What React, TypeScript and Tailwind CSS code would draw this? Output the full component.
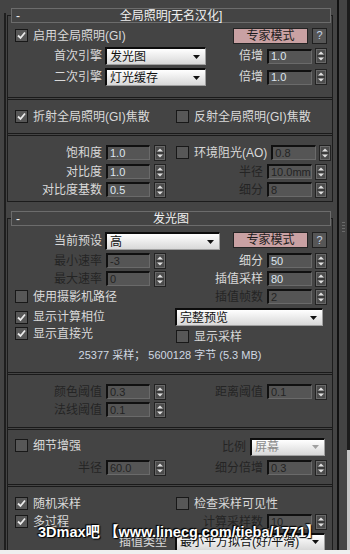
import React from 'react';

// V-Ray 全局照明 / 发光图 rollouts, 3ds Max dark UI
const ui = "font-['Liberation_Sans','Noto_Sans_CJK_SC',sans-serif]";

function Check({ on }: { on?: boolean }) {
  return (
    <div className="w-[13px] h-[13px] shrink-0 border border-[#181818] bg-[#575757] flex items-center justify-center">
      {on && (
        <svg width="9" height="9" viewBox="0 0 9 9">
          <path d="M1 4.5 L3.5 7 L8 1.5" fill="none" stroke="#ececec" strokeWidth="1.8" />
        </svg>
      )}
    </div>
  );
}

function Label({ children, off }: { children: React.ReactNode; off?: boolean }) {
  return (
    <span className={`text-[12px] leading-none whitespace-nowrap ${off ? 'text-[#242424]' : 'text-[#d9d9d9]'}`}>
      {children}
    </span>
  );
}

function CheckLabel({ on, children }: { on?: boolean; children: React.ReactNode }) {
  return (
    <div className="flex items-center">
      <Check on={on} />
      <span className="ml-[5px] text-[12px] leading-none whitespace-nowrap text-[#d9d9d9]">{children}</span>
    </div>
  );
}

function Field({ v, off, w }: { v: string; off?: boolean; w: string }) {
  return (
    <div
      className={`${w} h-[15px] shrink-0 flex items-center pl-[2px] bg-[#555555] border-t-2 border-l-2 border-[#101010] border-r border-b border-r-[#6a6a6a] border-b-[#6a6a6a] text-[11px] leading-none font-['Liberation_Sans',sans-serif] ${off ? 'text-[#242424]' : 'text-[#dde5ef]'}`}
    >
      {v}
    </div>
  );
}

function Spin() {
  return (
    <svg width="12" height="16" viewBox="0 0 12 16" className="block">
      <rect x="0.5" y="0.5" width="11" height="15" fill="#4c4c4c" stroke="#222222" />
      <rect x="1.5" y="1.5" width="9" height="13" fill="none" stroke="#686868" />
      <path d="M3 6.5 L6 3.5 L9 6.5 Z" fill="#e2e2e2" />
      <line x1="2" y1="8" x2="10" y2="8" stroke="#2a2a2a" />
      <path d="M3 9.5 L9 9.5 L6 12.5 Z" fill="#e2e2e2" />
    </svg>
  );
}

function Drop({ v, w, off }: { v: string; w: string; off?: boolean }) {
  return (
    <div
      className={`${w} h-[18px] shrink-0 flex items-center justify-between pl-[3px] pr-[5px] border-t-2 border-l-2 border-[#0c0c0c] border-r border-b border-r-[#a0a0a0] border-b-[#a0a0a0] bg-linear-to-b from-[#ffffff] to-[#d8d8d8] ${off ? 'text-[#8c8c8c]' : 'text-[#111111]'}`}
    >
      <span className="text-[12px] leading-none whitespace-nowrap">{v}</span>
      <svg width="7" height="4" viewBox="0 0 7 4">
        <path d="M0 0 H7 L3.5 4 Z" fill={off ? '#a0a0a0' : '#111111'} />
      </svg>
    </div>
  );
}

function NumL({ label, v, off }: { label: string; v: string; off?: boolean }) {
  return (
    <div className="w-[168px] shrink-0 flex items-center">
      <div className="w-[94px] flex justify-end">
        <Label off={off}>{label}</Label>
      </div>
      <div className="ml-[4px]">
        <Field v={v} off={off} w="w-[44px]" />
      </div>
      <div className="ml-[4px]">
        <Spin />
      </div>
    </div>
  );
}

function NumR({ lead, v, off, left }: { lead: React.ReactNode; v: string; off?: boolean; left?: boolean }) {
  return (
    <div className="flex-1 flex items-center pr-[5px]">
      <div className={`flex-1 flex items-center ${left ? 'justify-start' : 'justify-end'}`}>{lead}</div>
      <div className="ml-[4px]">
        <Field v={v} off={off} w="w-[45px]" />
      </div>
      <div className="ml-[3px]">
        <Spin />
      </div>
    </div>
  );
}

function Buttons() {
  return (
    <div className="ml-auto flex items-center pr-[5px]">
      <div className="w-[75px] h-[16px] bg-[#c9a1a3] border border-[#242424] flex items-center justify-center text-[12px] leading-none text-[#1c1c1c]">
        专家模式
      </div>
      <div className="ml-[4px] w-[15px] h-[16px] bg-[#565656] border border-[#202020] flex items-center justify-center text-[11px] leading-none text-[#c6d4e6]">
        ?
      </div>
    </div>
  );
}

function Head({ title }: { title: string }) {
  return (
    <div className="-mt-[8px] ml-[3px] mr-[1px] h-[15px] border border-[#6c6c6c] bg-[#444444] flex items-center">
      <span className="w-[14px] pl-[4px] text-[12px] leading-none text-[#eeeeee]">-</span>
      <span className="flex-1 text-center text-[12px] leading-none text-[#f0f0f0]">{title}</span>
      <span className="w-[14px]" />
    </div>
  );
}

function Sep({ mt }: { mt: string }) {
  return <div className={`${mt} h-[3px] border-t border-b border-[#1a1a1a]`} />;
}

function GlobalIllum() {
  return (
    <div className="border border-[#1c1c1c] pb-[4px]">
      <Head title="全局照明[无名汉化]" />
      <div className="mt-[4px] h-[17px] flex items-center pl-[7px]">
        <CheckLabel on>启用全局照明(GI)</CheckLabel>
        <Buttons />
      </div>
      <div className="mt-[3px] h-[18px] flex items-center">
        <div className="w-[94px] flex justify-end">
          <Label>首次引擎</Label>
        </div>
        <div className="ml-[3px]">
          <Drop v="发光图" w="w-[101px]" />
        </div>
        <NumR lead={<Label>倍增</Label>} v="1.0" />
      </div>
      <div className="mt-[3px] h-[18px] flex items-center">
        <div className="w-[94px] flex justify-end">
          <Label>二次引擎</Label>
        </div>
        <div className="ml-[3px]">
          <Drop v="灯光缓存" w="w-[101px]" />
        </div>
        <NumR lead={<Label>倍增</Label>} v="1.0" />
      </div>
      <Sep mt="mt-[11px]" />
      <div className="mt-[10px] h-[13px] flex items-center">
        <div className="w-[168px] pl-[7px]">
          <CheckLabel on>折射全局照明(GI)焦散</CheckLabel>
        </div>
        <CheckLabel>反射全局照明(GI)焦散</CheckLabel>
      </div>
      <Sep mt="mt-[10px]" />
      <div className="mt-[9px] h-[15px] flex items-center">
        <NumL label="饱和度" v="1.0" />
        <NumR left lead={<CheckLabel>环境阻光(AO)</CheckLabel>} v="0.8" off />
      </div>
      <div className="mt-[4px] h-[15px] flex items-center">
        <NumL label="对比度" v="1.0" />
        <NumR lead={<Label off>半径</Label>} v="10.0mm" off />
      </div>
      <div className="mt-[3px] h-[15px] flex items-center">
        <NumL label="对比度基数" v="0.5" />
        <NumR lead={<Label off>细分</Label>} v="8" off />
      </div>
    </div>
  );
}

function IrradianceMap() {
  return (
    <div className="mt-[16px] border border-[#1c1c1c] pb-[10px]">
      <Head title="发光图" />
      <div className="mt-[6px] h-[18px] flex items-start">
        <div className="h-[18px] w-[94px] flex items-center justify-end">
          <Label>当前预设</Label>
        </div>
        <div className="ml-[3px]">
          <Drop v="高" w="w-[115px]" />
        </div>
        <Buttons />
      </div>
      <div className="mt-[3px] h-[15px] flex items-center">
        <NumL label="最小速率" v="-3" off />
        <NumR lead={<Label>细分</Label>} v="50" />
      </div>
      <div className="mt-[3px] h-[15px] flex items-center">
        <NumL label="最大速率" v="0" off />
        <NumR lead={<Label>插值采样</Label>} v="80" />
      </div>
      <div className="mt-[3px] h-[15px] flex items-center">
        <div className="w-[168px] pl-[7px]">
          <CheckLabel>使用摄影机路径</CheckLabel>
        </div>
        <NumR lead={<Label off>插值帧数</Label>} v="2" off />
      </div>
      <div className="mt-[4px] h-[18px] flex items-center">
        <div className="w-[167px] pl-[7px]">
          <CheckLabel on>显示计算相位</CheckLabel>
        </div>
        <Drop v="完整预览" w="w-[148px]" />
      </div>
      <div className="mt-[1px] h-[16px] flex items-start">
        <div className="w-[168px] pl-[7px]">
          <CheckLabel on>显示直接光</CheckLabel>
        </div>
        <div className="mt-[3px]">
          <CheckLabel>显示采样</CheckLabel>
        </div>
      </div>
      <div className="mt-[5px] h-[14px] flex items-center justify-center text-[11px] leading-none text-[#d0d8e2] whitespace-nowrap">
        25377 采样； 5600128 字节 (5.3 MB)
      </div>
      <Sep mt="mt-[10px]" />
      <div className="mt-[9px] h-[15px] flex items-center">
        <NumL label="颜色阈值" v="0.3" off />
        <NumR lead={<Label off>距离阈值</Label>} v="0.1" off />
      </div>
      <div className="mt-[3px] h-[15px] flex items-center">
        <NumL label="法线阈值" v="0.1" off />
      </div>
      <Sep mt="mt-[10px]" />
      <div className="mt-[7px] h-[19px] flex items-start">
        <div className="w-[168px] pl-[7px] pt-[2px]">
          <CheckLabel>细节增强</CheckLabel>
        </div>
        <div className="flex-1 h-[19px] flex items-center justify-end pr-[7px]">
          <Label off>比例</Label>
          <div className="ml-[4px]">
            <Drop v="屏幕" w="w-[75px]" off />
          </div>
        </div>
      </div>
      <div className="mt-[4px] h-[15px] flex items-center">
        <NumL label="半径" v="60.0" off />
        <NumR lead={<Label off>细分倍增</Label>} v="0.3" off />
      </div>
      <Sep mt="mt-[9px]" />
      <div className="mt-[10px] h-[13px] flex items-center">
        <div className="w-[168px] pl-[7px]">
          <CheckLabel on>随机采样</CheckLabel>
        </div>
        <CheckLabel>检查采样可见性</CheckLabel>
      </div>
      <div className="mt-[4px] h-[15px] flex items-center">
        <div className="w-[168px] pl-[7px]">
          <CheckLabel on>多过程</CheckLabel>
        </div>
        <NumR lead={<Label off>计算采样数</Label>} v="10" off />
      </div>
      <div className="mt-[3px] h-[19px] flex items-center">
        <div className="w-[159px] flex justify-end">
          <Label>插值类型</Label>
        </div>
        <div className="ml-[8px]">
          <Drop v="最小平方拟合(好/平滑)" w="w-[150px]" />
        </div>
      </div>
    </div>
  );
}

export default function App() {
  return (
    <div className={`relative w-[350px] h-[554px] overflow-hidden bg-[#444444] ${ui}`}>
      <div className="h-[550px] flex overflow-hidden">
        <div className="w-[4px] shrink-0" />
        <div className="w-[2px] shrink-0 mt-[13px] bg-[#1e1e1e]" />
        <div className="w-[1px] shrink-0" />
        <div className="w-[326px] shrink-0 pt-[15px]">
          <GlobalIllum />
          <IrradianceMap />
        </div>
        <div className="w-[4px] shrink-0" />
        <div className="w-[2px] shrink-0 bg-[#111111]" />
        <div className="w-[8px] shrink-0 flex justify-center pt-[221px]">
          <svg width="3" height="11" viewBox="0 0 3 11">
            <path d="M0 1.5 H3 M0 4.5 H3 M0 7.5 H3 M0 10.5 H3" stroke="#6a6a6a" />
          </svg>
        </div>
        <div className="w-[3px] shrink-0 flex flex-col">
          <div className="h-[450px] bg-[#1c1c1c]" />
          <div className="flex-1 bg-[#c6c6c6]" />
        </div>
      </div>
      <div className="h-[4px] bg-[#efefef]" />

      {/* forum watermark over the bottom rows */}
      <div className="absolute left-[38px] top-[525px] text-[14.5px] leading-none font-bold text-white whitespace-nowrap [text-shadow:0_0_2px_#000,1px_1px_1px_#000,-1px_-1px_1px_#000]">
        3Dmax吧 【www.linecg.com/tieba/1771】
      </div>
    </div>
  );
}
